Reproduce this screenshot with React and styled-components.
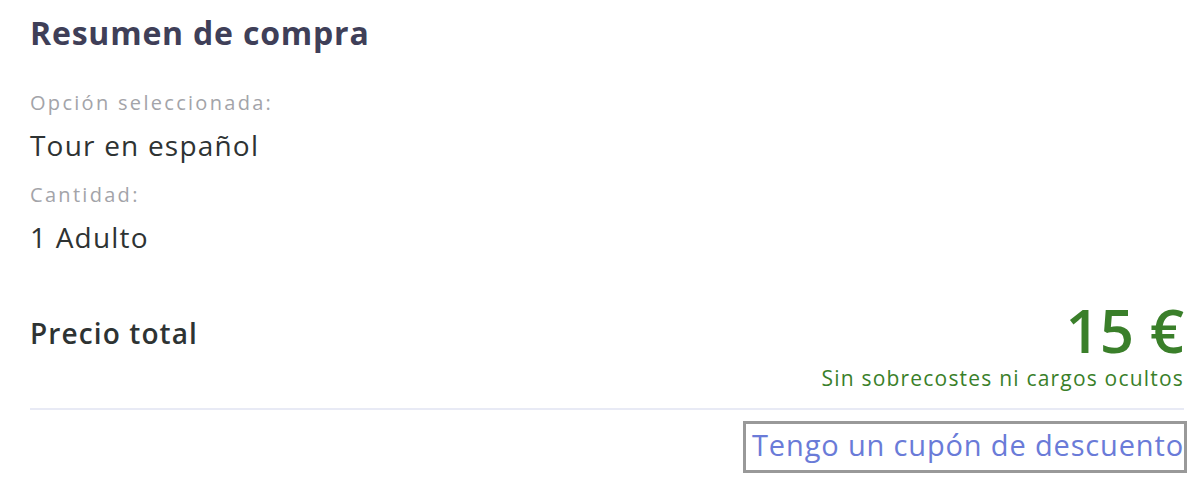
import React from 'react';
import styled, { createGlobalStyle } from 'styled-components';

const GlobalStyle = createGlobalStyle`
  html, body {
    margin: 0;
    padding: 0;
    background: #fff;
  }
  body {
    font-family: "Open Sans", "Noto Sans", sans-serif;
    -webkit-font-smoothing: antialiased;
  }
`;

function App() {
  return (
    <>
      <GlobalStyle />
      <Summary>
        <Title>Resumen de compra</Title>
        <Field>
          <Label>Opción seleccionada:</Label>
          <Value>Tour en español</Value>
        </Field>
        <Field>
          <Label>Cantidad:</Label>
          <Value>1 Adulto</Value>
        </Field>
        <TotalRow>
          <TotalLabel>Precio total</TotalLabel>
          <PriceBlock>
            <Price>15 €</Price>
            <PriceNote>Sin sobrecostes ni cargos ocultos</PriceNote>
          </PriceBlock>
        </TotalRow>
        <Footer>
          <CouponLink href="#">Tengo un cupón de descuento</CouponLink>
        </Footer>
      </Summary>
    </>
  );
}

const Summary = styled.div`
  padding: 13px 20px 20px 30px;
  width: 1154px;
`;

const Title = styled.h2`
  margin: 0 0 38px;
  font-size: 32px;
  line-height: 40px;
  font-weight: 700;
  color: #3f3f58;
  letter-spacing: 0.8px;
`;

const Field = styled.div`
  margin-bottom: 20px;
`;

const Label = styled.div`
  font-size: 20px;
  line-height: 24px;
  font-weight: 500;
  color: #a3a4a9;
  letter-spacing: 2.3px;
`;

const Value = styled.div`
  margin-top: 12px;
  font-size: 28px;
  line-height: 36px;
  color: #2e3333;
  letter-spacing: 1.2px;
`;

const TotalRow = styled.div`
  display: flex;
  justify-content: space-between;
  align-items: flex-start;
  margin-top: 44px;
  padding-bottom: 17px;
  border-bottom: 2px solid #e8eaf5;
`;

const TotalLabel = styled.div`
  margin-top: 16px;
  font-size: 28px;
  line-height: 36px;
  font-weight: 600;
  color: #2e3333;
  letter-spacing: 1.1px;
`;

const PriceBlock = styled.div`
  display: flex;
  flex-direction: column;
  align-items: flex-end;
`;

const Price = styled.div`
  font-size: 60px;
  line-height: 62px;
  font-weight: 600;
  color: #3a7f2a;
`;

const PriceNote = styled.div`
  margin-top: 4px;
  font-size: 21px;
  line-height: 26px;
  color: #3a7f2a;
  letter-spacing: 1.2px;
`;

const Footer = styled.div`
  display: flex;
  justify-content: flex-end;
  padding-top: 11px;
`;

const CouponLink = styled.a`
  display: inline-block;
  margin-right: -3px;
  padding: 1px 0 5px 6px;
  font-size: 29px;
  line-height: 40px;
  color: #6a7bd8;
  text-decoration: none;
  letter-spacing: 0.85px;
  border: 3px solid #999;
`;

export default App;
